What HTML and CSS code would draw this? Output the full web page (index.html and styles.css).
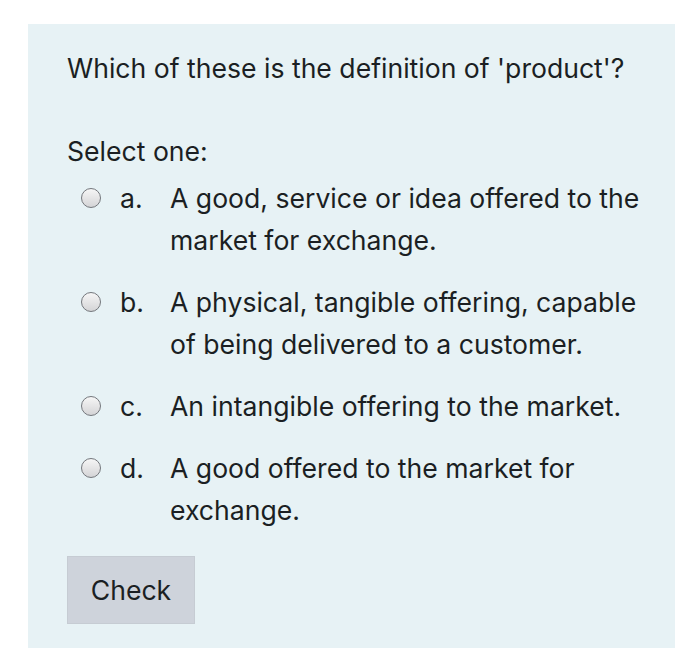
FILE: index.html
```html
<!DOCTYPE html>
<html lang="en">
<head>
<meta charset="utf-8">
<title>Quiz question</title>
<link rel="stylesheet" href="styles.css">
</head>
<body>
<div class="panel">
  <div class="question">Which of these is the definition of 'product'?</div>
  <div class="prompt">Select one:</div>
  <div class="answers">
    <label class="option"><span class="radio"></span><span class="letter">a.</span><span class="text">A good, service or idea offered to the market for exchange.</span></label>
    <label class="option"><span class="radio"></span><span class="letter">b.</span><span class="text">A physical, tangible offering, capable of being delivered to a customer.</span></label>
    <label class="option"><span class="radio"></span><span class="letter">c.</span><span class="text">An intangible offering to the market.</span></label>
    <label class="option"><span class="radio"></span><span class="letter">d.</span><span class="text">A good offered to the market for exchange.</span></label>
  </div>
  <button class="check">Check</button>
</div>
</body>
</html>
```
FILE: styles.css
```css
html, body {
  margin: 0;
  padding: 0;
  background: #ffffff;
}
body {
  font-family: Inter, "Liberation Sans", Arial, sans-serif;
  color: #1b1f23;
  font-size: 26.6px;
}
.panel {
  margin: 24px 0 0 28px;
  width: 647px;
  height: 624px;
  box-sizing: border-box;
  background: #e7f2f5;
  padding: 23px 30px 0 39px;
}
.question {
  line-height: 42px;
}
.prompt {
  margin-top: 41px;
  line-height: 42px;
}
.answers {
  display: flex;
  flex-direction: column;
  gap: 20px;
  margin-top: 5px;
  padding-left: 14px;
}
.option {
  display: flex;
  align-items: flex-start;
  line-height: 42px;
}
.radio {
  flex: none;
  width: 18px;
  height: 18px;
  margin-top: 11px;
  border: 1px solid #74777c;
  border-radius: 50%;
  background: linear-gradient(#f6f6f6, #d4d4d6);
}
.letter {
  flex: none;
  width: 50px;
  margin-left: 19px;
}
.text {
  width: 486px;
}
.check {
  display: block;
  margin-top: 25px;
  width: 128px;
  height: 68px;
  background: #ced3db;
  border: 1px solid #c6ccd3;
  font-family: inherit;
  font-size: 26.6px;
  color: #1b1f23;
  padding: 0;
}
```
